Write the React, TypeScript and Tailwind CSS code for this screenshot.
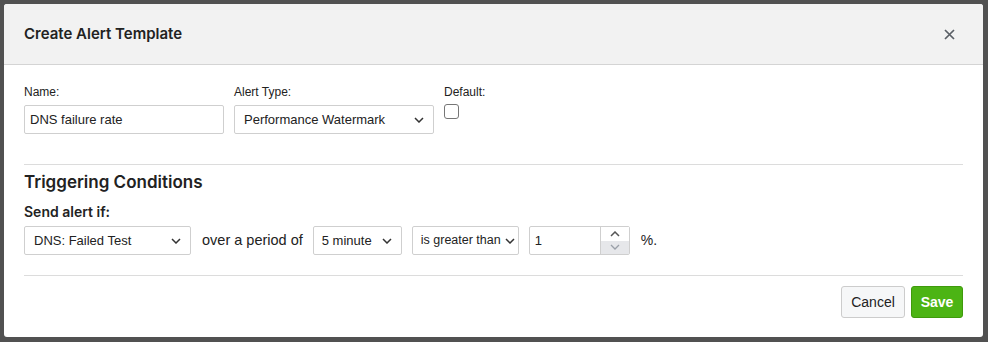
import { useState } from "react";

const SANS = "font-['Liberation_Sans',Arial,sans-serif]";
const HEAD = "font-['Inter','Liberation_Sans',sans-serif]";

function Chevron() {
  return (
    <svg width="10" height="6" viewBox="0 0 10 6" className="shrink-0" fill="none" stroke="#333" strokeWidth="1.5">
      <path d="M1 1l4 4 4-4" />
    </svg>
  );
}

function FakeSelect({ value, className }: { value: string; className: string }) {
  return (
    <div
      className={`flex h-[29px] items-center justify-between gap-[4px] rounded-[2px] border border-[#cfcfcf] bg-white text-[13px] text-[#222] ${className}`}
    >
      <span className="whitespace-nowrap">{value}</span>
      <Chevron />
    </div>
  );
}

export default function App() {
  const [name, setName] = useState("DNS failure rate");
  const [threshold, setThreshold] = useState("1");

  return (
    <div className={`h-[342px] w-[988px] bg-[#515151] p-[4px] ${SANS}`}>
      <div className="flex h-[333px] w-[979px] flex-col overflow-hidden rounded-[3px] bg-white">
        <div className="flex h-[61px] shrink-0 items-center justify-between border-b border-[#d4d4d4] bg-[#f2f2f2] pl-[20px] pr-[28px]">
          <h1 className={`text-[15px] font-semibold text-[#222] ${HEAD}`}>Create Alert Template</h1>
          <svg width="11" height="11" viewBox="0 0 11 11" stroke="#5a5f66" strokeWidth="1.7">
            <path d="M1 1l9 9M10 1l-9 9" />
          </svg>
        </div>

        <div className="px-[20px]">
          <div className="flex gap-[10px] pt-[20px]">
            <div className="flex flex-col">
              <label className="mb-[6px] text-[12px] leading-[14px] text-[#222]">Name:</label>
              <input
                value={name}
                onChange={(e) => setName(e.target.value)}
                className="h-[29px] w-[200px] rounded-[2px] border border-[#cfcfcf] px-[5px] text-[13px] text-[#222] outline-none"
              />
            </div>
            <div className="flex flex-col">
              <label className="mb-[6px] text-[12px] leading-[14px] text-[#222]">Alert Type:</label>
              <FakeSelect value="Performance Watermark" className="w-[200px] pl-[9px] pr-[9px]" />
            </div>
            <div className="flex flex-col">
              <label className="mb-[5px] text-[12px] leading-[14px] text-[#222]">Default:</label>
              <div className="h-[15px] w-[15px] rounded-[3px] border border-[#767676] bg-white" />
            </div>
          </div>

          <div className="mt-[30px] border-t border-[#dcdcdc]" />

          <h2 className={`mt-[7px] text-[17px] font-semibold leading-[20px] text-[#222] ${HEAD}`}>Triggering Conditions</h2>
          <div className={`mt-[12px] text-[14px] font-semibold leading-[16px] text-[#222] ${HEAD}`}>Send alert if:</div>

          <div className="mt-[6px] flex items-center">
            <FakeSelect value="DNS: Failed Test" className="w-[167px] pl-[9px] pr-[9px]" />
            <span className="ml-[11px] mr-[10px] text-[14.5px] text-[#222]">over a period of</span>
            <FakeSelect value="5 minute" className="w-[89px] pl-[8px] pr-[9px]" />
            <FakeSelect value="is greater than" className="ml-[10px] w-[107px] pl-[8px] pr-[5px] !text-[12.5px]" />
            <div className="ml-[10px] flex h-[29px] w-[101px] rounded-[2px] border border-[#cfcfcf]">
              <input
                value={threshold}
                onChange={(e) => setThreshold(e.target.value)}
                className="w-[70px] px-[5px] text-[13px] text-[#222] outline-none"
              />
              <div className="flex w-[30px] flex-col border-l border-[#cfcfcf]">
                <div className="flex flex-1 items-center justify-center bg-white">
                  <svg width="10" height="6" viewBox="0 0 10 6" fill="none" stroke="#555" strokeWidth="1.5">
                    <path d="M1 5l4-4 4 4" />
                  </svg>
                </div>
                <div className="flex flex-1 items-center justify-center bg-[#e6e7ea]">
                  <svg width="10" height="6" viewBox="0 0 10 6" fill="none" stroke="#9aa0a8" strokeWidth="1.3">
                    <path d="M1 1l4 4 4-4" />
                  </svg>
                </div>
              </div>
            </div>
            <span className="ml-[11px] text-[14px] text-[#222]">%.</span>
          </div>

          <div className="mt-[20px] border-t border-[#dcdcdc]" />

          <div className="mt-[10px] flex justify-end gap-[6px]">
            <button className="h-[32px] w-[64px] rounded-[3px] border border-[#cccccc] bg-[#f6f7f8] text-[14px] text-[#222]">
              Cancel
            </button>
            <button className="h-[32px] w-[52px] rounded-[3px] border border-[#3f9a0c] bg-[#4cb414] text-[14px] font-semibold text-white">
              Save
            </button>
          </div>
        </div>
      </div>
    </div>
  );
}
